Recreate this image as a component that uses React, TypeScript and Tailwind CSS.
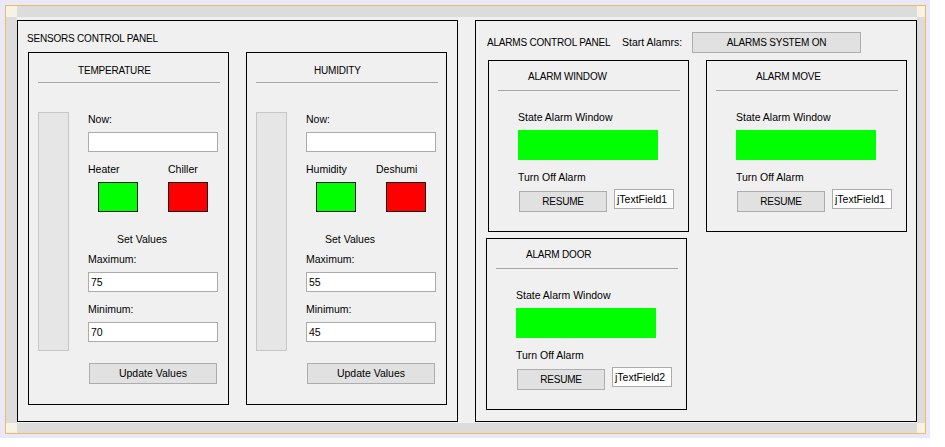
import React from "react";

type Kids = { children?: React.ReactNode; className?: string };

const Label = ({ children, className = "" }: Kids) => (
  <div className={`h-[14px] leading-[14px] text-[10.5px] whitespace-nowrap ${className}`}>{children}</div>
);

const Field = ({ value = "", className = "" }: { value?: string; className?: string }) => (
  <div
    className={`h-[20px] bg-white border border-[#ababab] pl-[2px] leading-[18px] text-[10.5px] whitespace-nowrap overflow-hidden ${className}`}
  >
    {value}
  </div>
);

const Btn = ({ children, className = "" }: Kids) => (
  <div
    className={`h-[21px] bg-[#e1e1e1] border border-[#adadad] flex items-center justify-center whitespace-nowrap ${className}`}
  >
    {children}
  </div>
);

type SensorProps = {
  title: string;
  titlePad: string;
  first: string;
  second: string;
  firstCol: string;
  setPad: string;
  max: string;
  min: string;
};

const SensorBox = ({ title, titlePad, first, second, firstCol, setPad, max, min }: SensorProps) => (
  <div className="w-[201px] h-[353px] border border-black">
    <div className={`pt-[10px] h-[26px] leading-[16px] text-[10px] tracking-[-0.2px] ${titlePad}`}>{title}</div>
    <div className="mt-[3px] ml-[9px] w-[182px] h-px bg-[#a6a6a6]" />
    <div className="mt-[29px] flex items-start">
      <div className="ml-[9px] w-[31px] h-[239px] bg-[#e6e6e6] border border-[#c6c6c6]" />
      <div className="ml-[19px] w-[130px]">
        <Label>Now:</Label>
        <Field className="mt-[6px]" />
        <div className="mt-[10px] flex">
          <Label className={firstCol}>{first}</Label>
          <Label>{second}</Label>
        </div>
        <div className="mt-[6px] flex">
          <div className="ml-[10px] w-[40px] h-[30px] bg-[#00ff00] border border-[#1a1a1a]" />
          <div className="ml-[30px] w-[40px] h-[30px] bg-[#ff0000] border border-[#1a1a1a]" />
        </div>
        <Label className={`mt-[20px] ${setPad}`}>Set Values</Label>
        <Label className="mt-[6px]">Maximum:</Label>
        <Field className="mt-[6px]" value={max} />
        <Label className="mt-[10px]">Minimum:</Label>
        <Field className="mt-[6px]" value={min} />
        <Btn className="mt-[21px] ml-[1px] w-[128px] text-[10.5px]">Update Values</Btn>
      </div>
    </div>
  </div>
);

const AlarmBox = ({ title, titlePad, field, className = "" }: { title: string; titlePad: string; field: string; className?: string }) => (
  <div className={`w-[201px] h-[172px] border border-black ${className}`}>
    <div className={`pt-[8px] h-[24px] leading-[16px] text-[10px] tracking-[-0.2px] ${titlePad}`}>{title}</div>
    <div className="mt-[5px] ml-[9px] w-[182px] h-px bg-[#a6a6a6]" />
    <Label className="mt-[19px] ml-[29px]">State Alarm Window</Label>
    <div className="mt-[6px] ml-[29px] w-[140px] h-[30px] bg-[#00ff00]" />
    <Label className="mt-[10px] ml-[29px]">Turn Off Alarm</Label>
    <div className="mt-[5px] flex items-start">
      <Btn className="mt-[2px] ml-[30px] w-[88px] h-[20px] text-[10px] tracking-[-0.2px]">RESUME</Btn>
      <Field className="ml-[7px] w-[60px] pl-[1px]" value={field} />
    </div>
  </div>
);

export default function App() {
  return (
    <div className="w-[945px] h-[447px] bg-white text-black font-['Liberation_Sans',Arial,sans-serif]">
      <div className="w-[930px] h-[438px] bg-[#e8e8f8] pl-[5px] pt-[5px] pr-[4px] pb-[4px]">
        <div className="border border-[#f2b95e] grid grid-cols-[11px_900px_8px] grid-rows-[11px_406px_10px]">
          <div className="bg-[#f8f2e4]" />
          <div className="bg-[#dcdcdc]" />
          <div className="bg-[#f8f2e4]" />
          <div className="bg-[#dcdcdc]" />

          {/* content */}
          <div className="bg-[#f0f0f0] pt-[3px] flex gap-[17px]">
            {/* Sensors */}
            <div className="w-[441px] h-[402px] border border-black">
              <div className="pt-[9px] pl-[9px] h-[27px] leading-[18px] text-[10px] tracking-[-0.2px]">SENSORS CONTROL PANEL</div>
              <div className="mt-[4px] pl-[10px] flex gap-[17px]">
                <SensorBox
                  title="TEMPERATURE"
                  titlePad="pl-[49px]"
                  first="Heater"
                  second="Chiller"
                  firstCol="w-[80px]"
                  setPad="ml-[29px]"
                  max="75"
                  min="70"
                />
                <SensorBox
                  title="HUMIDITY"
                  titlePad="pl-[67px]"
                  first="Humidity"
                  second="Deshumi"
                  firstCol="w-[70px]"
                  setPad="ml-[19px]"
                  max="55"
                  min="45"
                />
              </div>
            </div>

            {/* Alarms */}
            <div className="w-[442px] h-[402px] border border-black">
              <div className="pt-[11px] pl-[11px] flex items-center">
                <span className="w-[135px] text-[10px] tracking-[-0.2px] whitespace-nowrap">ALARMS CONTROL PANEL</span>
                <span className="w-[70px] text-[10.5px] whitespace-nowrap">Start Alamrs:</span>
                <Btn className="w-[169px] text-[10px] tracking-[-0.2px]">ALARMS SYSTEM ON</Btn>
              </div>
              <div className="mt-[7px] pl-[12px]">
                <div className="flex gap-[17px]">
                  <AlarmBox title="ALARM WINDOW" titlePad="pl-[39px]" field="jTextField1" />
                  <AlarmBox title="ALARM MOVE" titlePad="pl-[49px]" field="jTextField1" />
                </div>
                <AlarmBox title="ALARM DOOR" titlePad="pl-[39px]" field="jTextField2" className="mt-[6px] ml-[-2px]" />
              </div>
            </div>
          </div>

          <div className="bg-[#dcdcdc]" />
          <div className="bg-[#f8f2e4]" />
          <div className="bg-[#dcdcdc]" />
          <div className="bg-[#f8f2e4]" />
        </div>
      </div>
    </div>
  );
}
